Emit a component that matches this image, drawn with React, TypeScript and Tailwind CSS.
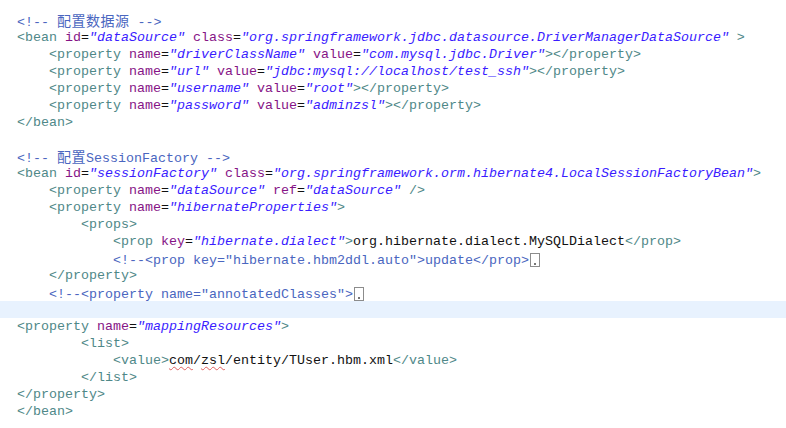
type Kind = "t" | "a" | "v" | "e" | "c" | "x" | "cjk" | "sq" | "fold";
type Tok = [Kind, string];

const cls: Record<Kind, string> = {
  t: "text-[#4f8888]",
  a: "text-[#861486]",
  v: "text-[#3a1cff] italic",
  e: "text-[#111]",
  c: "text-[#4a66c0]",
  x: "text-[#111]",
  cjk: "text-[#4a66c0] text-[14px] tracking-[0.5px] [font-family:'Noto_Sans_CJK_SC',sans-serif]",
  sq: "text-[#111] underline decoration-wavy decoration-[#e06060] decoration-1 underline-offset-2",
  fold: "",
};

const attr = (name: string, value: string): Tok[] => [
  ["a", " " + name],
  ["e", "="],
  ["v", `"${value}"`],
];

const prop = (name: string, value: string): Tok[] => [
  ["t", "    <property"],
  ...attr("name", name),
  ...attr("value", value),
  ["t", "></property>"],
];

const lines: Tok[][] = [
  [["c", "<!-- "], ["cjk", "配置数据源"], ["c", " -->"]],
  [
    ["t", "<bean"],
    ...attr("id", "dataSource"),
    ...attr("class", "org.springframework.jdbc.datasource.DriverManagerDataSource"),
    ["t", " >"],
  ],
  prop("driverClassName", "com.mysql.jdbc.Driver"),
  prop("url", "jdbc:mysql://localhost/test_ssh"),
  prop("username", "root"),
  prop("password", "adminzsl"),
  [["t", "</bean>"]],
  [],
  [["c", "<!-- "], ["cjk", "配置"], ["c", "SessionFactory -->"]],
  [
    ["t", "<bean"],
    ...attr("id", "sessionFactory"),
    ...attr("class", "org.springframework.orm.hibernate4.LocalSessionFactoryBean"),
    ["t", ">"],
  ],
  [["t", "    <property"], ...attr("name", "dataSource"), ...attr("ref", "dataSource"), ["t", " />"]],
  [["t", "    <property"], ...attr("name", "hibernateProperties"), ["t", ">"]],
  [["t", "        <props>"]],
  [
    ["t", "            <prop"],
    ...attr("key", "hibernate.dialect"),
    ["t", ">"],
    ["x", "org.hibernate.dialect.MySQLDialect"],
    ["t", "</prop>"],
  ],
  [["c", '            <!--<prop key="hibernate.hbm2ddl.auto">update</prop>'], ["fold", ""]],
  [["t", "    </property>"]],
  [["c", '    <!--<property name="annotatedClasses">'], ["fold", ""]],
  [],
  [["t", "<property"], ...attr("name", "mappingResources"), ["t", ">"]],
  [["t", "        <list>"]],
  [
    ["t", "            <value>"],
    ["sq", "com"],
    ["x", "/"],
    ["sq", "zsl"],
    ["x", "/entity/TUser.hbm.xml"],
    ["t", "</value>"],
  ],
  [["t", "        </list>"]],
  [["t", "</property>"]],
  [["t", "</bean>"]],
];

// folded-comment marker shown after a collapsed block
function Fold() {
  return (
    <span className="relative ml-px inline-block h-[14px] w-[10px] translate-y-[3px] border border-[#8c8c8c] bg-white">
      <span className="absolute bottom-[1px] left-[3px] h-[2px] w-[2px] bg-[#777]" />
    </span>
  );
}

export default function App() {
  return (
    <div className="h-[428px] w-[786px] overflow-hidden bg-white pt-[12px] font-['Liberation_Mono',monospace] text-[13.33px] leading-[17px]">
      {lines.map((toks, i) => (
        <div
          key={i}
          className={`h-[17px] whitespace-pre pl-[17px] ${i === 17 ? "bg-[#e8f2fe]" : ""}`}
        >
          {toks.map(([k, s], j) =>
            k === "fold" ? (
              <Fold key={j} />
            ) : (
              <span key={j} className={cls[k]}>
                {s}
              </span>
            )
          )}
        </div>
      ))}
    </div>
  );
}
